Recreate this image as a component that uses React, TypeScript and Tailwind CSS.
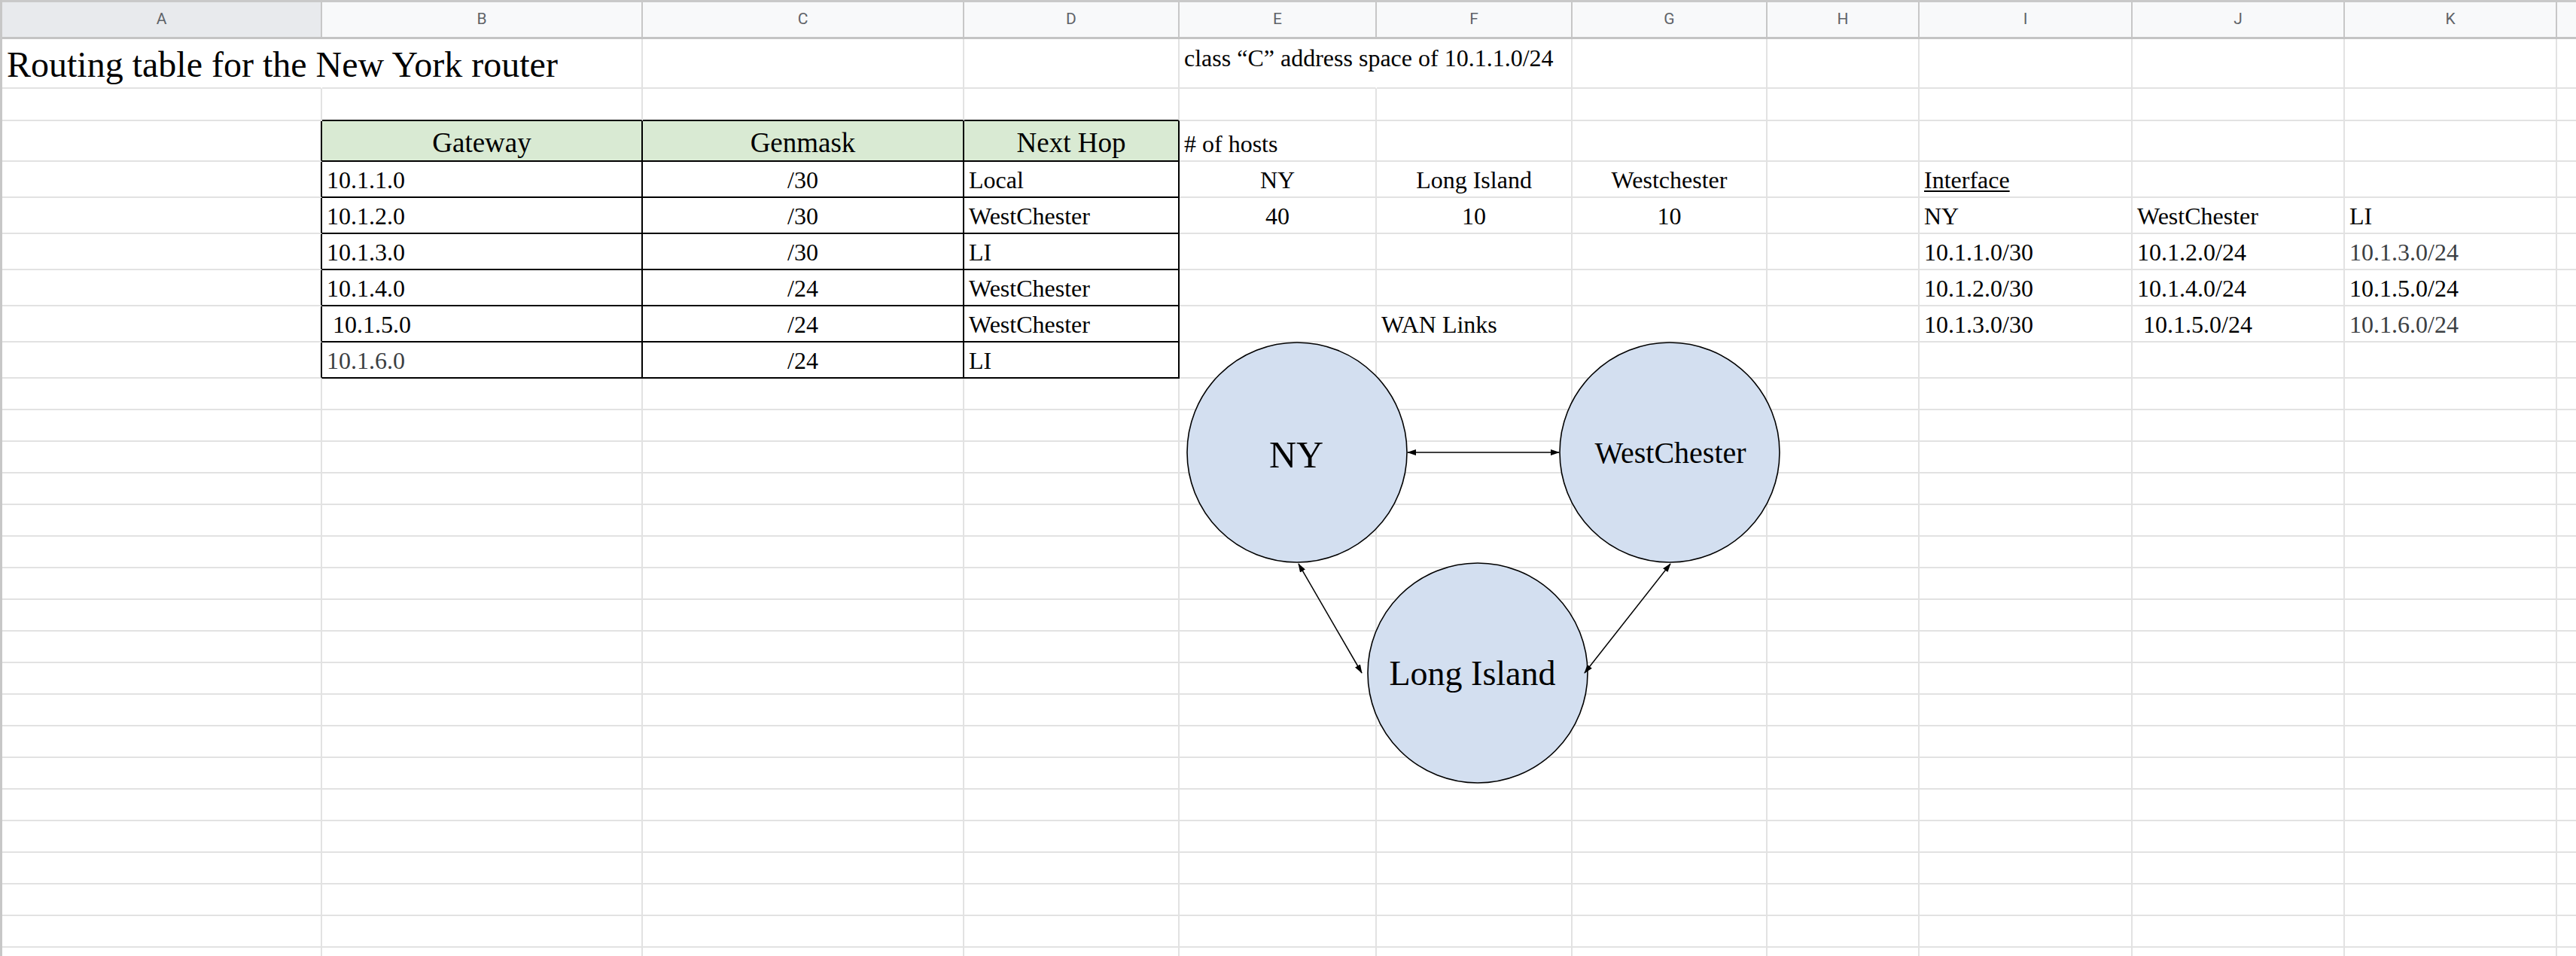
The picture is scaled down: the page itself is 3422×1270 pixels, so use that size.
import React from "react";

type Cell = {
  text?: string;
  center?: boolean;
  gray?: boolean;
  size?: "title" | "head" | "body";
  green?: boolean;
  underline?: boolean;
  top?: boolean;
  rb?: "grid" | "black" | "none";
  bb?: "grid" | "black";
};

const colWidths = [
  "w-[425px]",
  "w-[426px]",
  "w-[427px]",
  "w-[286px]",
  "w-[262px]",
  "w-[260px]",
  "w-[259px]",
  "w-[202px]",
  "w-[283px]",
  "w-[282px]",
  "w-[282px]",
  "w-[300px]",
];

// last column is cut by the window edge, its letter is off-screen
const letters = ["A", "B", "C", "D", "E", "F", "G", "H", "I", "J", "K", ""];

const serif = "font-['Liberation_Serif','Times_New_Roman',serif]";

// table body rows (B, C, D)
const routes: [string, string, string, boolean?][] = [
  ["10.1.1.0", "/30", "Local"],
  ["10.1.2.0", "/30", "WestChester"],
  ["10.1.3.0", "/30", "LI"],
  ["10.1.4.0", "/24", "WestChester"],
  [" 10.1.5.0", "/24", "WestChester"],
  ["10.1.6.0", "/24", "LI", true],
];

const side: Record<number, Cell[]> = {
  0: [{ text: "NY", center: true }, { text: "Long Island", center: true }, { text: "Westchester", center: true }, {}, { text: "Interface", underline: true }, {}, {}, {}],
  1: [{ text: "40", center: true }, { text: "10", center: true }, { text: "10", center: true }, {}, { text: "NY" }, { text: "WestChester" }, { text: "LI" }, {}],
  2: [{}, {}, {}, {}, { text: "10.1.1.0/30" }, { text: "10.1.2.0/24" }, { text: "10.1.3.0/24", gray: true }, {}],
  3: [{}, {}, {}, {}, { text: "10.1.2.0/30" }, { text: "10.1.4.0/24" }, { text: "10.1.5.0/24" }, {}],
  4: [{}, { text: "WAN Links" }, {}, {}, { text: "10.1.3.0/30" }, { text: " 10.1.5.0/24" }, { text: "10.1.6.0/24", gray: true }, {}],
  5: [{}, {}, {}, {}, {}, {}, {}, {}],
};

function buildRows(): { h: string; cells: Cell[] }[] {
  const empty = (n: number): Cell[] => Array.from({ length: n }, () => ({}));
  const rows: { h: string; cells: Cell[] }[] = [];

  const r1 = empty(12);
  r1[0] = { text: "Routing table for the New York router", size: "title", rb: "none" };
  r1[4] = { text: "class \u201cC\u201d address space of 10.1.1.0/24", top: true, rb: "none" };
  rows.push({ h: "h-[66px]", cells: r1 });

  const r2 = empty(12);
  r2[1] = { bb: "black", rb: "grid" };
  r2[2] = { bb: "black" };
  r2[3] = { bb: "black" };
  rows.push({ h: "h-[43px]", cells: r2 });

  const r3 = empty(12);
  r3[0] = { rb: "black" };
  r3[1] = { text: "Gateway", center: true, green: true, size: "head", rb: "black", bb: "black" };
  r3[2] = { text: "Genmask", center: true, green: true, size: "head", rb: "black", bb: "black" };
  r3[3] = { text: "Next Hop", center: true, green: true, size: "head", rb: "black", bb: "black" };
  r3[4] = { text: "# of hosts" };
  rows.push({ h: "h-[54px]", cells: r3 });

  routes.forEach(([gw, mask, hop, gray], i) => {
    const r = empty(12);
    r[0] = { rb: "black" };
    r[1] = { text: gw, gray, rb: "black", bb: "black" };
    r[2] = { text: mask, center: true, rb: "black", bb: "black" };
    r[3] = { text: hop, rb: "black", bb: "black" };
    side[i].forEach((c, j) => {
      r[4 + j] = c;
    });
    rows.push({ h: "h-[48px]", cells: r });
  });

  for (let i = 0; i < 19; i++) rows.push({ h: "h-[42px]", cells: empty(12) });
  return rows;
}

function SheetCell({ cell, col }: { cell: Cell; col: number }) {
  const rb =
    cell.rb === "black" ? "border-r-black" : cell.rb === "none" ? "border-r-transparent" : "border-r-[#e2e2e2]";
  const bb = cell.bb === "black" ? "border-b-black" : "border-b-[#e2e2e2]";
  const size =
    cell.size === "title"
      ? "text-[48px] pb-[3px]"
      : cell.size === "head"
        ? "text-[37px] pb-[1px]"
        : cell.top
          ? "text-[32px] pt-[7px]"
          : "text-[32px] pb-[3px]";
  return (
    <div
      className={`${colWidths[col]} shrink-0 h-full flex ${cell.top ? "items-start" : "items-end"} ${
        cell.center ? "justify-center" : "justify-start"
      } px-[6px] border-r-2 border-b-2 ${rb} ${bb} ${cell.green ? "bg-[#d9ead3]" : ""}`}
    >
      {cell.text && (
        <span
          className={`${serif} ${size} leading-[1.15] whitespace-pre ${
            cell.gray ? "text-[#3c4043]" : "text-black"
          } ${cell.underline ? "underline underline-offset-[3px] decoration-2" : ""}`}
        >
          {cell.text}
        </span>
      )}
    </div>
  );
}

function WanDiagram() {
  return (
    <svg
      className="absolute left-[1560px] top-[440px] w-[820px] h-[620px] pointer-events-none"
      viewBox="1560 440 820 620"
    >
      <defs>
        <marker id="head" viewBox="0 0 12 8" refX="11" refY="4" markerWidth="12" markerHeight="8" markerUnits="userSpaceOnUse" orient="auto-start-reverse">
          <path d="M0 0 L12 4 L0 8 Z" fill="#000" />
        </marker>
      </defs>
      <circle cx="1720" cy="601" r="146" fill="#d3dff0" stroke="#000" strokeWidth="1.6" />
      <circle cx="2215" cy="601" r="146" fill="#d3dff0" stroke="#000" strokeWidth="1.6" />
      <circle cx="1960" cy="894" r="146" fill="#d3dff0" stroke="#000" strokeWidth="1.6" />
      <line x1="1867" y1="601" x2="2068" y2="601" stroke="#000" strokeWidth="1.5" markerStart="url(#head)" markerEnd="url(#head)" />
      <line x1="1722" y1="749" x2="1806" y2="894" stroke="#000" strokeWidth="1.5" markerStart="url(#head)" markerEnd="url(#head)" />
      <line x1="2216" y1="749" x2="2102" y2="894" stroke="#000" strokeWidth="1.5" markerStart="url(#head)" markerEnd="url(#head)" />
      <text x="1719" y="621" textAnchor="middle" fontFamily="'Liberation Serif', serif" fontSize="50" fill="#000">
        NY
      </text>
      <text x="2216" y="615" textAnchor="middle" fontFamily="'Liberation Serif', serif" fontSize="40" fill="#000">
        WestChester
      </text>
      <text x="1953" y="910" textAnchor="middle" fontFamily="'Liberation Serif', serif" fontSize="46" fill="#000">
        Long Island
      </text>
    </svg>
  );
}

export default function App() {
  const rows = buildRows();
  return (
    <div className="relative w-[3422px] h-[1270px] overflow-hidden bg-white border-l-[3px] border-[#c7c7c7]">
      {/* column letters */}
      <div className="flex h-[52px] border-t-[3px] border-b-[3px] border-t-[#c9c9c9] border-b-[#c4c4c4] bg-[#f8f9fa]">
        {letters.map((l, i) => (
          <div
            key={i}
            className={`${colWidths[i]} shrink-0 flex items-center justify-center border-r-2 border-[#c7c7c7] font-['Roboto',sans-serif] text-[21px] text-[#5f6368] ${
              i === 0 ? "bg-[#e8eaed]" : ""
            }`}
          >
            {l}
          </div>
        ))}
      </div>

      {rows.map((row, ri) => (
        <div key={ri} className={`flex ${row.h}`}>
          {row.cells.map((c, ci) => (
            <SheetCell key={ci} cell={c} col={ci} />
          ))}
        </div>
      ))}

      <WanDiagram />
    </div>
  );
}
